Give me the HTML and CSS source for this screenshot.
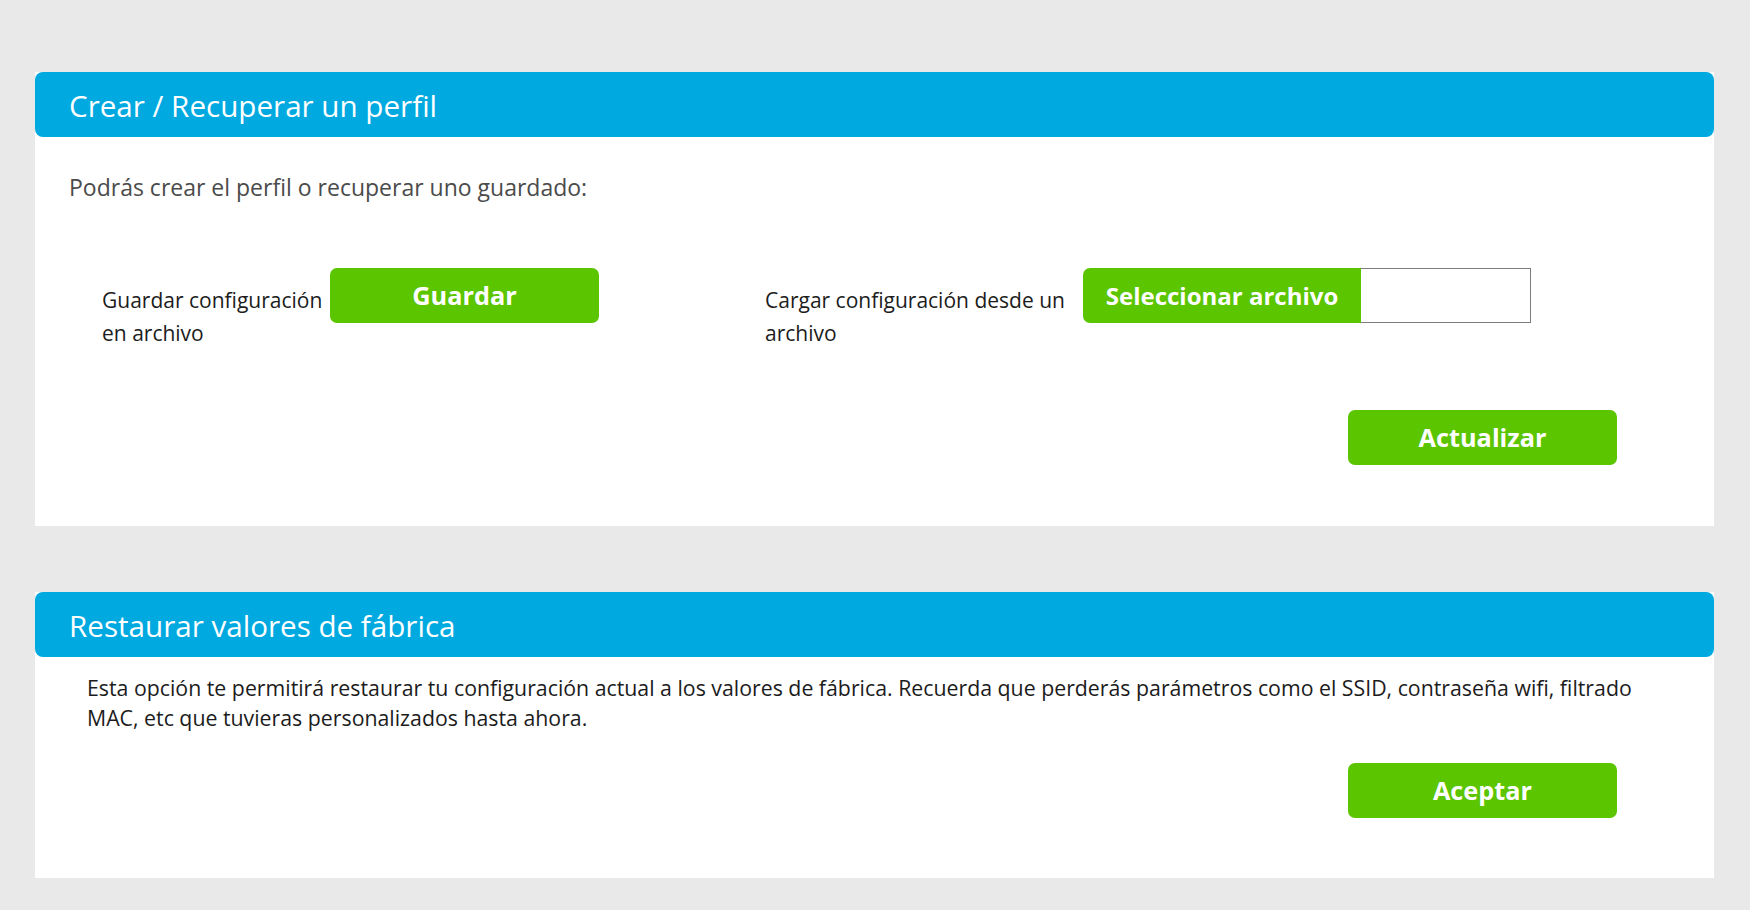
FILE: index.html
```html
<!DOCTYPE html>
<html lang="es">
<head>
    <meta charset="UTF-8">
    <meta name="viewport" content="width=device-width, initial-scale=1.0">
    <title>Perfil del router</title>
    <link rel="stylesheet" href="styles.css">
</head>
<body>

<div class="panel">
    <h2 class="panel-title">Crear / Recuperar un perfil</h2>
    <div class="panel-body profile-body">
        <p class="intro">Podrás crear el perfil o recuperar uno guardado:</p>

        <div class="profile-row">
            <div class="profile-group">
                <label class="field-label save-label">Guardar configuración en archivo</label>
                <button class="btn">Guardar</button>
            </div>
            <div class="profile-group">
                <label class="field-label load-label" for="file">Cargar configuración desde un archivo</label>
                <div class="file-input">
                    <span class="file-btn">Seleccionar archivo</span>
                    <span class="file-name"></span>
                </div>
            </div>
        </div>

        <div class="actions">
            <button class="btn">Actualizar</button>
        </div>
    </div>
</div>

<div class="panel">
    <h2 class="panel-title">Restaurar valores de fábrica</h2>
    <div class="panel-body reset-body">
        <p class="reset-text">Esta opción te permitirá restaurar tu configuración actual a los valores de fábrica. Recuerda que perderás parámetros como el SSID, contraseña wifi, filtrado MAC, etc que tuvieras personalizados hasta ahora.</p>
        <div class="actions reset-actions">
            <button class="btn">Aceptar</button>
        </div>
    </div>
</div>

</body>
</html>
```

FILE: styles.css
```css
:root {
    --background-color: #e9e9e9;
    --panel-color: #ffffff;
    --header-color: #00a9e0;
    --button-color: #5bc500;
    --text-color: #1c1c1c;
    --muted-color: #4b4b4b;
}
body {
    font-family: "Open Sans", "Noto Sans", Arial, sans-serif;
    margin: 0;
    padding: 72px 36px 40px 35px;
    background-color: var(--background-color);
    color: var(--text-color);
}

.panel {
    background-color: var(--panel-color);
}
.panel + .panel { margin-top: 66px; }

.panel-title {
    margin: 0;
    height: 65px;
    box-sizing: border-box;
    padding: 2px 0 0 34px;
    line-height: 63px;
    font-size: 29.6px;
    font-weight: 400;
    color: #fff;
    background-color: var(--header-color);
    border-radius: 8px;
}

/* Perfil */
.profile-body { padding: 35px 97px 61px 34px; }
.intro {
    margin: 0;
    font-size: 23px;
    line-height: 30px;
    color: var(--muted-color);
}

.profile-row {
    display: grid;
    grid-template-columns: 663px auto;
    margin-top: 66px;
    padding-left: 33px;
}
.profile-group { display: flex; align-items: flex-start; }

.field-label {
    margin-top: 16px;
    font-size: 21px;
    line-height: 33px;
    color: var(--text-color);
}
.save-label { width: 228px; flex: 0 0 228px; }
.load-label { width: 318px; flex: 0 0 318px; }

.btn {
    width: 269px;
    height: 55px;
    padding: 0;
    border: none;
    border-radius: 7px;
    background-color: var(--button-color);
    color: #fff;
    font-family: inherit;
    font-size: 25.3px;
    font-weight: 700;
    line-height: 1;
    cursor: pointer;
}

.file-input { display: flex; height: 55px; }
.file-btn {
    width: 278px;
    display: flex;
    align-items: center;
    justify-content: center;
    background-color: var(--button-color);
    border-radius: 7px 0 0 7px;
    color: #fff;
    font-size: 24px;
    font-weight: 700;
}
.file-name {
    width: 169px;
    border: 1px solid #7d7d7d;
    border-left: none;
    background-color: #fff;
}

.actions { display: flex; justify-content: flex-end; margin-top: 60px; }

/* Restaurar */
.reset-body { padding: 16px 52px 60px 52px; }
.reset-text {
    margin: 0;
    font-size: 21.3px;
    line-height: 30px;
    color: var(--text-color);
}
.reset-actions { margin-top: 30px; padding-right: 45px; }
```
